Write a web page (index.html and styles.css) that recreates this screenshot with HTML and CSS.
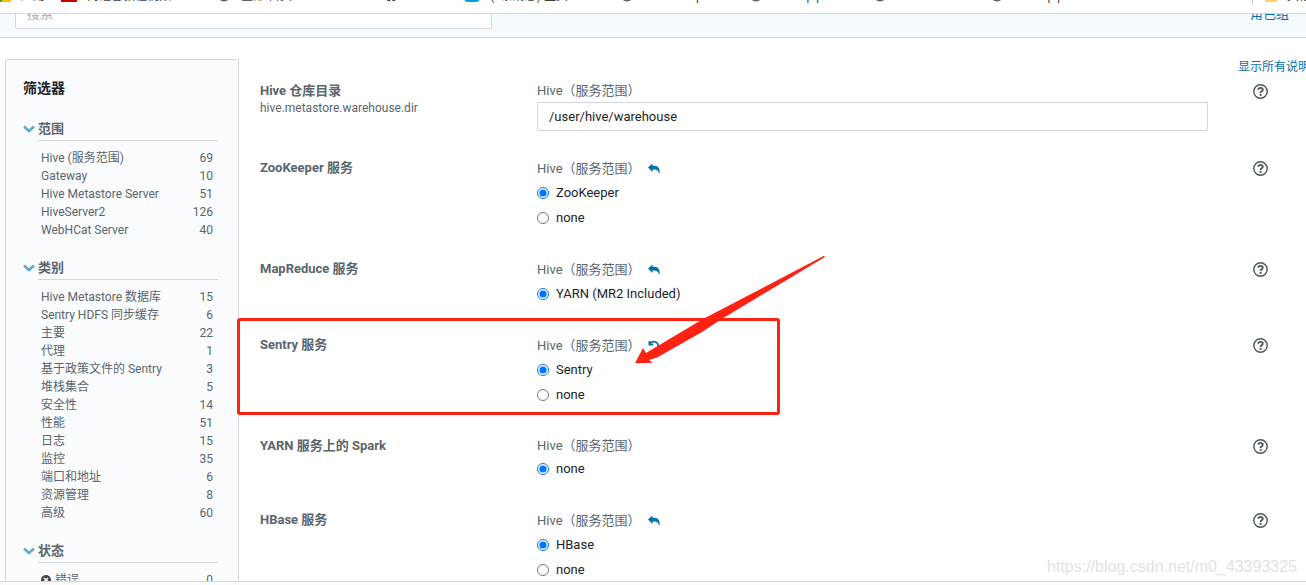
FILE: index.html
```html
<!DOCTYPE html>
<html lang="zh-CN">
<head>
<meta charset="utf-8">
<title>Hive 配置</title>
<link rel="stylesheet" href="styles.css">
</head>
<body>
<svg class="defs" aria-hidden="true">
  <symbol id="reply" viewBox="0 0 12 10"><path d="M0 4 4.500 0v2.200h2.200C10 2.300 12 4.600 11.600 9.800h-.8C10.400 7.400 9 6.100 6.500 6.100h-2v2.300z"/></symbol>
  <symbol id="undo" viewBox="0 0 12 12"><path d="M1 1v4h4M1.500 4.500C3 1.500 7 .8 9.300 3.200c2 2.200 1.400 5.300-1 6.700" fill="none" stroke="currentColor" stroke-width="1.900"/></symbol>
  <symbol id="help" viewBox="0 0 15 15"><circle cx="7.500" cy="7.500" r="6.700" fill="none" stroke="currentColor" stroke-width="1.400"/><path d="M5.200 5.800C5.300 3.300 9.800 3.300 9.800 5.800c0 1.500-2.200 1.500-2.200 3.100" fill="none" stroke="currentColor" stroke-width="1.800"/><path d="M6.600 9.900h2v1.900h-2z"/></symbol>
  <symbol id="chevron" viewBox="0 0 12 8"><path d="M1 1.500 6 6l5-4.500" fill="none" stroke="currentColor" stroke-width="2.600"/></symbol>
  <symbol id="globe" viewBox="0 0 14 14"><circle cx="7" cy="7" r="7"/></symbol>
</svg>

<nav class="bookmarks">
  <div class="bookmark-row">
    <span class="bookmark"><i class="apps"></i>应用</span>
    <span class="bookmark"><i class="tile tile-red"></i>尚硅谷教程视频</span>
    <span class="bookmark"><svg class="globe"><use href="#globe"/></svg>全部 首页</span>
    <span class="bookmark"><svg class="github" viewBox="0 0 14 14"><path d="M7 0a7 7 0 0 0-3 13.300l2 .5V11C3 10 3 5 4.500 4h5C11 5 11 10 8.500 11v2.800l2-.5A7 7 0 0 0 7 0z"/></svg></span>
    <span class="bookmark"><i class="tile tile-blue"></i>(2条消息) 主页</span>
    <span class="bookmark"><svg class="globe"><use href="#globe"/></svg>localhost p</span>
    <span class="bookmark"><svg class="globe"><use href="#globe"/></svg>hadoop p</span>
    <span class="bookmark"><svg class="globe"><use href="#globe"/></svg>master</span>
    <span class="bookmark"><svg class="globe"><use href="#globe"/></svg>hadoop p</span>
    <span class="bookmark other"><i class="folder"></i>其他书签</span>
  </div>
</nav>

<header class="toolbar">
  <input class="search" type="search" placeholder="搜索" aria-label="搜索">
  <a class="roles" href="#">角色组</a>
</header>

<div class="page">
  <aside class="filters">
    <h2>筛选器</h2>
    <section>
      <h3><svg><use href="#chevron"/></svg><span>范围</span></h3>
      <ul>
        <li><span>Hive (服务范围)</span><span>69</span></li>
        <li><span>Gateway</span><span>10</span></li>
        <li><span>Hive Metastore Server</span><span>51</span></li>
        <li><span>HiveServer2</span><span>126</span></li>
        <li><span>WebHCat Server</span><span>40</span></li>
      </ul>
    </section>
    <section>
      <h3><svg><use href="#chevron"/></svg><span>类别</span></h3>
      <ul>
        <li><span>Hive Metastore 数据库</span><span>15</span></li>
        <li><span>Sentry HDFS 同步缓存</span><span>6</span></li>
        <li><span>主要</span><span>22</span></li>
        <li><span>代理</span><span>1</span></li>
        <li><span>基于政策文件的 Sentry</span><span>3</span></li>
        <li><span>堆栈集合</span><span>5</span></li>
        <li><span>安全性</span><span>14</span></li>
        <li><span>性能</span><span>51</span></li>
        <li><span>日志</span><span>15</span></li>
        <li><span>监控</span><span>35</span></li>
        <li><span>端口和地址</span><span>6</span></li>
        <li><span>资源管理</span><span>8</span></li>
        <li><span>高级</span><span>60</span></li>
      </ul>
    </section>
    <section>
      <h3><svg><use href="#chevron"/></svg><span>状态</span></h3>
      <ul>
        <li><span class="status"><svg viewBox="0 0 10 10"><circle cx="5" cy="5" r="5"/><path d="m3 3 4 4m0-4L3 7" stroke="#fff" stroke-width="1.500"/></svg>错误</span><span>0</span></li>
      </ul>
    </section>
  </aside>

  <main class="settings">
    <a class="show-all" href="#">显示所有说明</a>

    <div class="setting">
      <div class="name"><label for="warehouse">Hive 仓库目录</label><small>hive.metastore.warehouse.dir</small></div>
      <div class="value">
        <div class="scope">Hive（服务范围）</div>
        <input class="text" id="warehouse" type="text" value="/user/hive/warehouse">
      </div>
      <button class="help" aria-label="说明"><svg><use href="#help"/></svg></button>
    </div>

    <div class="setting">
      <div class="name" id="zk">ZooKeeper 服务</div>
      <div class="value" role="radiogroup" aria-labelledby="zk">
        <div class="scope revertible">Hive（服务范围）<button class="revert" aria-label="还原"><svg><use href="#reply"/></svg></button></div>
        <div class="options">
          <label><input type="radio" name="zk" checked>ZooKeeper</label>
          <label><input type="radio" name="zk">none</label>
        </div>
      </div>
      <button class="help" aria-label="说明"><svg><use href="#help"/></svg></button>
    </div>

    <div class="setting">
      <div class="name" id="mr">MapReduce 服务</div>
      <div class="value" role="radiogroup" aria-labelledby="mr">
        <div class="scope revertible">Hive（服务范围）<button class="revert" aria-label="还原"><svg><use href="#reply"/></svg></button></div>
        <div class="options">
          <label><input type="radio" name="mr" checked>YARN (MR2 Included)</label>
        </div>
      </div>
      <button class="help" aria-label="说明"><svg><use href="#help"/></svg></button>
    </div>

    <div class="setting">
      <div class="name" id="sentry">Sentry 服务</div>
      <div class="value" role="radiogroup" aria-labelledby="sentry">
        <div class="scope revertible">Hive（服务范围）<button class="revert" aria-label="撤消"><svg><use href="#undo"/></svg></button></div>
        <div class="options">
          <label><input type="radio" name="sentry" checked>Sentry</label>
          <label><input type="radio" name="sentry">none</label>
        </div>
      </div>
      <button class="help" aria-label="说明"><svg><use href="#help"/></svg></button>
    </div>

    <div class="setting">
      <div class="name" id="spark">YARN 服务上的 Spark</div>
      <div class="value" role="radiogroup" aria-labelledby="spark">
        <div class="scope">Hive（服务范围）</div>
        <div class="options">
          <label><input type="radio" name="spark" checked>none</label>
        </div>
      </div>
      <button class="help" aria-label="说明"><svg><use href="#help"/></svg></button>
    </div>

    <div class="setting">
      <div class="name" id="hbase">HBase 服务</div>
      <div class="value" role="radiogroup" aria-labelledby="hbase">
        <div class="scope revertible">Hive（服务范围）<button class="revert" aria-label="还原"><svg><use href="#reply"/></svg></button></div>
        <div class="options">
          <label><input type="radio" name="hbase" checked>HBase</label>
          <label><input type="radio" name="hbase">none</label>
        </div>
      </div>
      <button class="help" aria-label="说明"><svg><use href="#help"/></svg></button>
    </div>
  </main>
</div>

<footer class="bottom-bar"></footer>

<div class="highlight"></div>
<svg class="arrow" viewBox="0 0 192 110"><path d="M190 .8 69 64 12 98 9 93 1 108.300l18-.6-4-2.700 8-2.500L68 77 86 65 191 2z"/></svg>
<div class="watermark">https://blog.csdn.net/m0_43393325</div>
</body>
</html>
```
FILE: styles.css
```css
* { box-sizing: border-box; }

body {
  position: relative;
  display: flex;
  flex-direction: column;
  height: 100vh;
  margin: 0;
  overflow: hidden;
  background: #fff;
  color: #5a656d;
  font: 13px/18px Roboto, "Noto Sans CJK SC", sans-serif;
}

h2, h3, ul { margin: 0; padding: 0; }
ul { list-style: none; }
a { color: #0072a9; text-decoration: none; }
button { padding: 0; border: 0; background: none; color: inherit; }
svg { display: block; fill: currentColor; }
.defs { position: absolute; width: 0; height: 0; }

.bookmarks {
  display: flex;
  flex: none;
  flex-direction: column;
  justify-content: flex-end;
  height: 14px;
  padding-bottom: 8px;
  overflow: hidden;
  border-bottom: 1px solid #d5d8db;
  color: #3c4043;
  font-size: 12px;
}
.bookmark-row {
  display: grid;
  flex: none;
  grid-template-columns: 61px 156px 167px 80px 156px 129px 124px 117px 1fr 54px;
  height: 18px;
}
.bookmark {
  display: flex;
  gap: 10px;
  overflow: hidden;
  white-space: nowrap;
}
.globe, .github { flex: none; width: 14px; height: 15px; color: #5f6368; }
.github { color: #222; }
.apps, .tile, .folder { flex: none; width: 16px; height: 15px; }
.apps { width: 11px; background: linear-gradient(90deg, #34a853 2px, #fbbc04 2px); }
.tile-red { background: #c00; }
.tile-blue { border-radius: 4px; background: #00a1d6; }
.folder { width: 12px; height: 15px; background: #f5d565; }
.other { border-left: 1px solid #c4c7ca; padding-left: 12px; }

.toolbar {
  display: flex;
  flex: none;
  align-items: flex-end;
  justify-content: space-between;
  height: 24px;
  padding: 0 17px 8px 15px;
  overflow: hidden;
  border-bottom: 1px solid #d5d8db;
  background: #f5faff;
}
.search {
  width: 477px;
  height: 32px;
  padding: 0 11px;
  border: 1px solid #d3d7da;
  border-radius: 1px;
  background: #fff;
  font: inherit;
}
.search::placeholder { color: #a9adb1; }
.roles { line-height: 20px; padding-bottom: 5px; }

.page { display: flex; flex: 1; min-height: 0; padding-left: 5px; overflow: hidden; }

.filters {
  flex: none;
  width: 234px;
  margin-top: 21px;
  padding: 18px 20px 0 17px;
  overflow: hidden;
  border: 1px solid #d3d7da;
  border-bottom: 0;
  border-radius: 2px 2px 0 0;
  background: #f9fbfd;
  font-size: 12px;
}
.filters h2 { margin-bottom: 19px; color: #1c2329; font-size: 14px; line-height: 20px; }
.filters section { margin-bottom: 17px; }
.filters h3 {
  display: flex;
  align-items: center;
  gap: 3px;
  font-size: 13px;
  line-height: 23px;
}
.filters h3 span { flex: 1; border-bottom: 1px solid #d3d7da; }
.filters h3 svg { width: 12px; height: 8px; color: #5eaad0; }
.filters ul { padding: 8px 5px 0 18px; }
.filters li { display: flex; justify-content: space-between; }
.status { display: flex; align-items: center; gap: 4px; }
.status svg { width: 10px; height: 10px; color: #3d474e; }

.settings { flex: 1; min-width: 0; padding: 21px 0 0 21px; overflow: hidden; }
.show-all {
  display: block;
  width: 68px;
  margin: 0 0 5px auto;
  font-size: 12px;
  line-height: 16px;
  white-space: nowrap;
}
.setting {
  display: grid;
  grid-template-columns: 277px 1fr 98px;
  align-items: start;
  margin-bottom: 26px;
}
.name { font-weight: 700; line-height: 22px; }
.name label, .name small { display: block; }
.name small { font-size: 12px; font-weight: 400; line-height: 12px; }
.scope { display: flex; align-items: center; height: 21px; }
.revertible { height: 23px; }
.revert { margin-left: 7px; color: #0072a9; }
.revert svg { width: 12px; height: 11px; }
.text {
  display: block;
  width: 100%;
  height: 29px;
  margin-top: 1px;
  padding: 0 11px;
  border: 1px solid #d3d7da;
  border-radius: 1px;
  color: #1c2329;
  font: inherit;
}
.options { padding-bottom: 2px; color: #1c2329; }
.options label { display: flex; align-items: center; height: 25px; }
.options input { width: 12px; height: 12px; margin: 0 7px 0 0; }
.help { margin: 4px 0 0 45px; color: #4c565e; }
.help svg { width: 15px; height: 15px; }

.bottom-bar { flex: none; height: 4px; border-top: 1px solid #d3d7da; background: #f9fbfd; }

.highlight {
  position: absolute;
  top: 318px;
  left: 237px;
  width: 543px;
  height: 97px;
  border: 3px solid #ff2112;
  border-radius: 3px;
}
.arrow { position: absolute; top: 255px; left: 634px; width: 192px; height: 110px; color: #ff2112; }
.watermark {
  position: absolute;
  right: 9px;
  bottom: 8px;
  color: #e2e2e2;
  font: 16px/20px "Liberation Sans", sans-serif;
}
```
